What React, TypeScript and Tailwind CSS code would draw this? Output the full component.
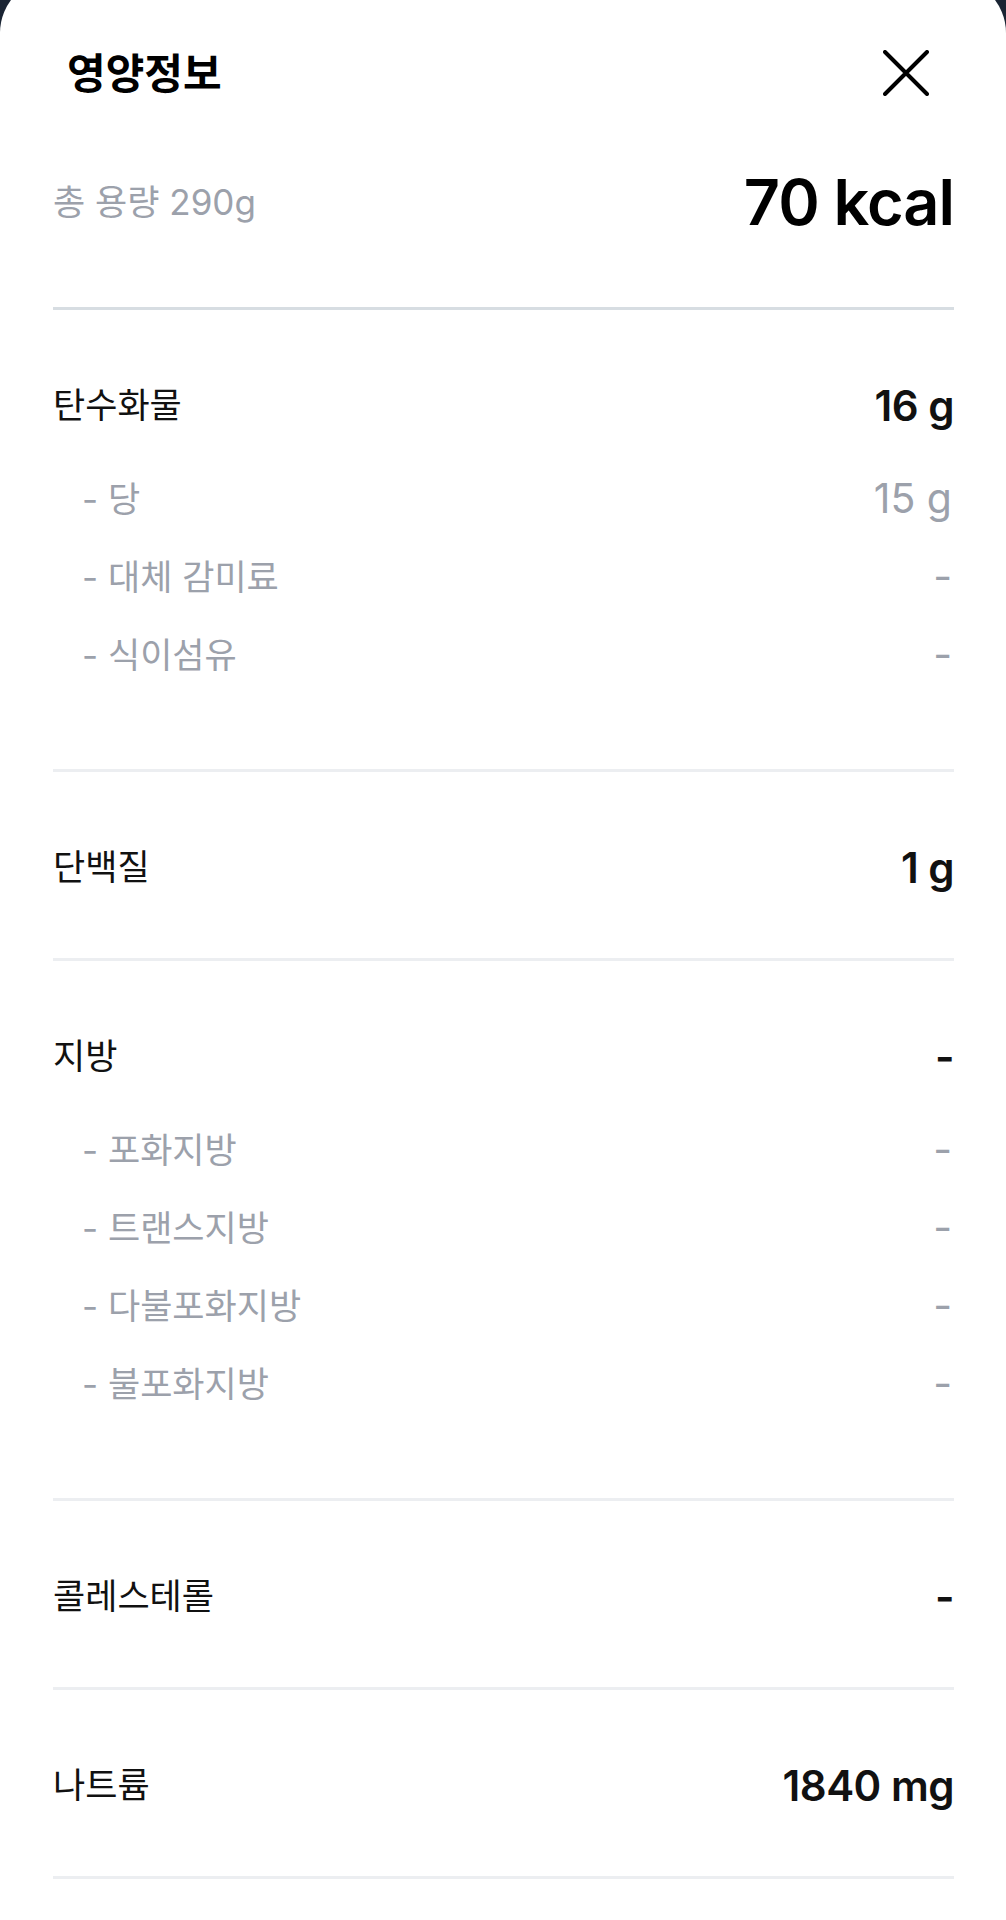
import React from 'react';

type SubItem = { label: string; value: string };
type Section = { label: string; value: string; subs?: SubItem[] };

const sections: Section[] = [
  {
    label: '탄수화물',
    value: '16 g',
    subs: [
      { label: '당', value: '15 g' },
      { label: '대체 감미료', value: '-' },
      { label: '식이섬유', value: '-' },
    ],
  },
  { label: '단백질', value: '1 g' },
  {
    label: '지방',
    value: '-',
    subs: [
      { label: '포화지방', value: '-' },
      { label: '트랜스지방', value: '-' },
      { label: '다불포화지방', value: '-' },
      { label: '불포화지방', value: '-' },
    ],
  },
  { label: '콜레스테롤', value: '-' },
  { label: '나트륨', value: '1840 mg' },
];

function CloseIcon() {
  return (
    <svg width="46" height="46" viewBox="0 0 46 46" fill="none">
      <path d="M2 2L44 44M44 2L2 44" stroke="#000" strokeWidth="4" strokeLinecap="round" />
    </svg>
  );
}

function NutrientSection({ section }: { section: Section }) {
  const hasSubs = !!section.subs;
  return (
    <div className={hasSubs ? 'pt-[71px] pb-[75px]' : 'pt-[71px] pb-[67px]'}>
      <div className="flex h-[48px] items-center justify-between">
        <span className="text-[35px] text-[#111]">{section.label}</span>
        <span className="text-[42px] font-semibold tracking-[-0.5px] text-[#111]">{section.value}</span>
      </div>
      {section.subs && (
        <div className="mt-[31px] flex flex-col">
          {section.subs.map((sub) => (
            <div key={sub.label} className="flex h-[78px] items-center justify-between pl-[29px] pr-[2px]">
              <span className="text-[35px] text-[#9ca1ab]">- {sub.label}</span>
              <span className="text-[41px] text-[#9ca1ab]">{sub.value}</span>
            </div>
          ))}
        </div>
      )}
    </div>
  );
}

export default function App() {
  return (
    <div className="h-[1920px] w-full overflow-hidden bg-[#1a2433] font-['Inter','Noto_Sans_CJK_KR',sans-serif]">
      <div className="mt-[-22px] h-[1942px] rounded-t-[55px] bg-white pt-[55px]">
        {/* Header */}
        <div className="flex h-[80px] items-center justify-between pl-[67px] pr-[77px]">
          <h2 className="text-[42px] font-semibold text-black">영양정보</h2>
          <CloseIcon />
        </div>

        <div className="pl-[53px] pr-[52px]">
          {/* Total */}
          <div className="mt-[49px] flex h-[80px] items-center justify-between">
            <span className="text-[35px] text-[#9ca1ab]">총 용량 290g</span>
            <span className="text-[63px] font-semibold tracking-[-1px] text-black">70 kcal</span>
          </div>
          <div className="mt-[65px] h-[3px] bg-[#d7dde2]" />

          {sections.map((section) => (
            <div key={section.label}>
              <NutrientSection section={section} />
              <div className="h-[3px] bg-[#eceef1]" />
            </div>
          ))}
        </div>
      </div>
    </div>
  );
}
